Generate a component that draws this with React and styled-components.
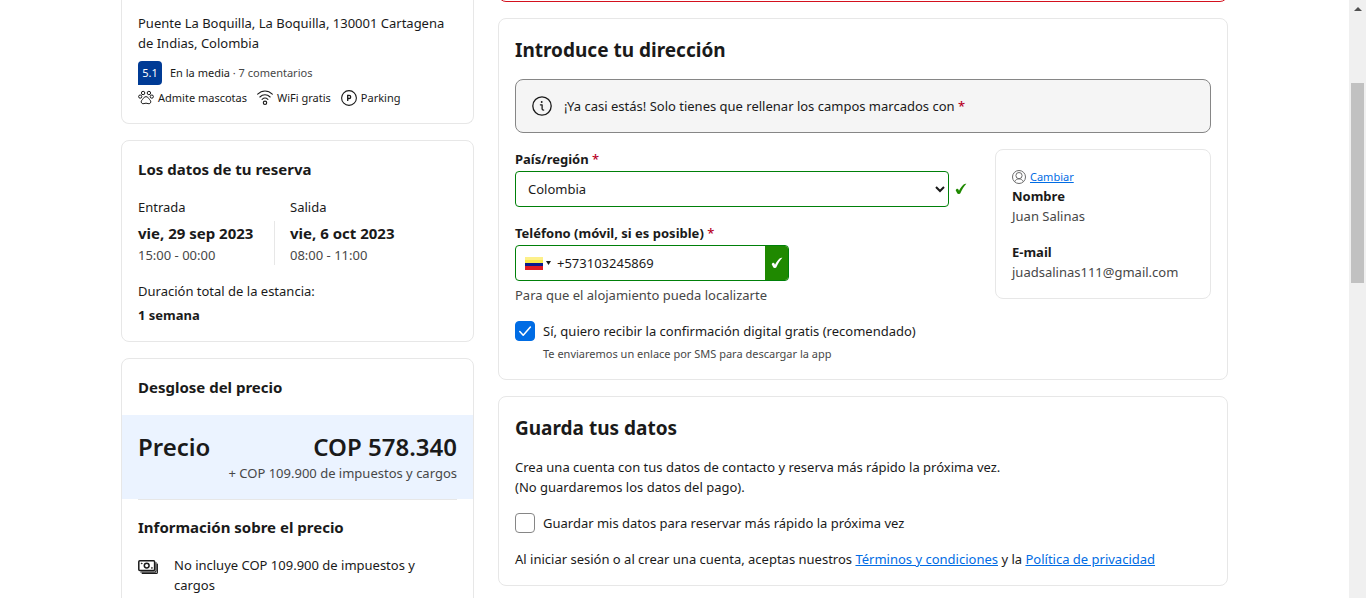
import React from 'react';
import styled, { createGlobalStyle, css } from 'styled-components';

const GlobalStyle = createGlobalStyle`
  *, *::before, *::after { box-sizing: border-box; }
  body { margin: 0; background: #fff; color: #1a1a1a; font: 13px/20px "Noto Sans", sans-serif; overflow: hidden; }
  h2, h3, p, dl, dd { margin: 0; }
  button, input, select { font: inherit; color: inherit; margin: 0; }
`;

const Viewport = styled.div`
  display: grid;
  grid-template-columns: minmax(0, 1fr) 17px;
  height: 100vh;
  overflow: hidden;
`;

const Page = styled.div`
  display: grid;
  grid-template-columns: minmax(0, 353fr) minmax(0, 730fr);
  gap: 24px;
  width: 100%;
  max-width: 1107px;
  margin: 0 auto;
  align-items: start;
`;

const Column = styled.div`
  display: flex;
  flex-direction: column;
  gap: 16px;
`;

const Card = styled.section`
  border: 1px solid #e7e7e7;
  border-radius: 8px;
  padding: 16px;
  ${(p) => p.$continued && css`
    border-top: 0;
    border-radius: 0 0 8px 8px;
    padding-top: 13px;
  `}
`;

const AlertClip = styled.div`
  display: flex;
  align-items: flex-end;
  height: 2px;
  overflow: hidden;
`;

const AlertEdge = styled.div`
  flex: 1;
  height: 24px;
  flex-shrink: 0;
  border: 1px solid #d4111e;
  border-radius: 8px;
`;

const SectionTitle = styled.h2`
  font-size: 19px;
  line-height: 30px;
  font-weight: 700;
  margin-bottom: 14px;
`;

const CardTitle = styled.h3`
  font-size: 15px;
  line-height: 24px;
  font-weight: 700;
  margin-bottom: 16px;
`;

const Strong = styled.strong`
  display: block;
  font-weight: 700;
`;

const Muted = styled.p`
  color: #474747;
`;

const Link = styled.a`
  color: #006ce4;
  text-decoration: underline;
  font-size: ${(p) => (p.$small ? '11px' : 'inherit')};
`;

const ReviewRow = styled.div`
  display: flex;
  align-items: center;
  gap: 8px;
  margin: 8px 0 4px;
`;

const Score = styled.span`
  display: grid;
  place-items: center;
  width: 24px;
  height: 24px;
  border-radius: 4px 4px 4px 0;
  background: #003b95;
  color: #fff;
  font-size: 11px;
`;

const ReviewText = styled.span`
  font-size: 11px;
`;

const Comments = styled.span`
  color: #474747;
`;

const Facilities = styled.ul`
  display: flex;
  gap: 10px;
  margin: 0;
  padding: 0;
  list-style: none;
  font-size: 11px;
  line-height: 18px;
`;

const Facility = styled.li`
  display: flex;
  align-items: center;
  gap: 4px;
`;

const Dates = styled.div`
  display: flex;
`;

const DateBlock = styled.div`
  position: relative;
  min-width: 120px;
  & + & {
    margin-left: 16px;
    padding-left: 16px;
  }
  & + &::before {
    content: '';
    position: absolute;
    left: 0;
    bottom: 0;
    height: 44px;
    border-left: 1px solid #e7e7e7;
  }
`;

const DateValue = styled.strong`
  display: block;
  font-size: 15px;
  line-height: 24px;
  font-weight: 700;
  margin-top: 4px;
`;

const Stay = styled.div`
  margin-top: 16px;
  display: grid;
  gap: 4px;
`;

const PriceBand = styled.div`
  display: grid;
  grid-template-columns: auto 1fr;
  margin: 0 -16px;
  padding: 16px;
  background: #ebf3ff;
`;

const Price = styled.strong`
  font-size: 24px;
  line-height: 32px;
  font-weight: 600;
  text-align: ${(p) => (p.$end ? 'right' : 'left')};
`;

const PriceNote = styled.p`
  grid-column: 1 / -1;
  text-align: right;
  color: #474747;
`;

const PriceInfo = styled.div`
  border-top: 1px solid #e7e7e7;
  padding-top: 15px;
`;

const PriceItem = styled.div`
  display: flex;
  align-items: flex-start;
  gap: 16px;
  padding-right: 16px;
  svg { flex: none; margin-top: 2px; }
`;

const Notice = styled.div`
  display: flex;
  align-items: center;
  gap: 12px;
  padding: 16px;
  margin-bottom: 16px;
  border: 1px solid #868686;
  border-radius: 8px;
  background: #f5f5f5;
`;

const Required = styled.span`
  color: #b8001f;
  font-weight: 500;
`;

const FormGrid = styled.div`
  display: grid;
  grid-template-columns: minmax(0, 1fr) 216px;
  gap: 16px;
  align-items: start;
`;

const Field = styled.div`
  margin-bottom: 16px;
`;

const Label = styled.label`
  display: block;
  font-weight: 700;
  margin-bottom: 2px;
`;

const SelectRow = styled.div`
  display: flex;
  align-items: center;
  gap: 6px;
  padding-right: 12px;
`;

const Select = styled.select`
  flex: 1;
  min-width: 0;
  height: 36px;
  padding: 0 1px 0 8px;
  border: 1px solid #008009;
  border-radius: 4px;
  background: #fff;
`;

const PhoneBox = styled.div`
  display: flex;
  width: 274px;
  max-width: 100%;
  height: 36px;
  border: 1px solid #008009;
  border-radius: 4px;
  overflow: hidden;
  margin-bottom: 4px;
`;

const FlagButton = styled.button`
  display: flex;
  align-items: center;
  gap: 3px;
  padding: 0 6px 0 9px;
  border: 0;
  background: none;
`;

const PhoneInput = styled.input`
  flex: 1;
  min-width: 0;
  padding: 0;
  border: 0;
  outline: 0;
  background: none;
`;

const ValidMark = styled.span`
  display: grid;
  place-items: center;
  width: 23px;
  background: #1f8900;
  color: #fff;
`;

const ValidGreen = styled.span`
  display: flex;
  color: #1f8900;
`;

const CheckRow = styled.label`
  display: flex;
  align-items: center;
  gap: 8px;
  margin-bottom: ${(p) => (p.$tight ? '4px' : '16px')};
`;

const BoxCell = styled.span`
  display: grid;
  place-items: center;
  width: 20px;
  height: 20px;
  & > * { grid-area: 1 / 1; }
  svg { display: none; pointer-events: none; }
  input:checked + svg { display: block; }
`;

const Checkbox = styled.input`
  appearance: none;
  width: 20px;
  height: 20px;
  border: 1px solid #868686;
  border-radius: 4px;
  background: #fff;
  &:checked { background: #006ce4; border-color: #006ce4; }
`;

const CheckHint = styled.p`
  padding-left: 28px;
  font-size: 11px;
  line-height: 18px;
  color: #474747;
`;

const UserCard = styled.aside`
  border: 1px solid #e7e7e7;
  border-radius: 8px;
  padding: 16px;
  overflow-wrap: anywhere;
`;

const ChangeRow = styled.div`
  display: flex;
  align-items: center;
  gap: 4px;
  height: 20px;
  padding-top: 2px;
`;

const Details = styled.dl`
  dt { font-weight: 700; }
  dd { color: #474747; }
  dd + dt { margin-top: 16px; }
`;

const Paragraph = styled.p`
  margin-bottom: ${(p) => (p.$last ? '0' : '16px')};
`;

const ScrollTrack = styled.div`
  display: flex;
  flex-direction: column;
  background: #f0f0f0;
`;

const ScrollButton = styled.button`
  display: grid;
  place-items: center;
  height: 17px;
  padding: 0;
  border: 0;
  background: none;
`;

const ScrollRail = styled.div`
  flex: 1;
  padding: 66px 2px 0;
`;

const ScrollThumb = styled.div`
  height: 200px;
  background: #c1c1c1;
`;

const PawIcon = () => (
  <svg width="16" height="16" viewBox="0 0 16 16" fill="none" stroke="#1a1a1a" strokeWidth="1">
    <circle cx="5.1" cy="3" r="1.7" />
    <circle cx="10.9" cy="3" r="1.7" />
    <circle cx="2.2" cy="6.600" r="1.600" />
    <circle cx="13.800" cy="6.600" r="1.600" />
    <path d="M8 6.700c-1.500 0-2.300 1-2.900 2-.7 1.100-2 1.800-1.900 3.200.1 1.500 1.500 2.100 2.800 1.700 1.300-.5 2.700-.5 4 0 1.300.4 2.700-.2 2.800-1.700.1-1.400-1.200-2.100-1.900-3.200-.6-1-1.400-2-2.900-2Z" />
  </svg>
);

const WifiIcon = () => (
  <svg width="16" height="16" viewBox="0 0 16 16" fill="none" stroke="#1a1a1a" strokeWidth="1.1" strokeLinecap="round">
    <path d="M.7 4.200C5-.1 11-.1 15.300 4.200M2.900 7c3-3 7.200-3 10.200 0M5.100 9.300c1.800-1.600 4-1.600 5.800 0" />
    <circle cx="8" cy="12.800" r="1.700" />
  </svg>
);

const ParkingIcon = () => (
  <svg width="16" height="16" viewBox="0 0 16 16" fill="none" stroke="#1a1a1a">
    <circle cx="8" cy="8" r="7.400" strokeWidth="1.100" />
    <path d="M6.700 11V5.300h1.400a1.600 1.600 0 0 1 0 3.200H6.700" strokeWidth="1.300" />
  </svg>
);

const InfoIcon = () => (
  <svg width="20" height="20" viewBox="0 0 20 20" fill="none" stroke="#1a1a1a" strokeWidth="1.300">
    <circle cx="10" cy="10" r="9.200" />
    <path d="M8.400 8.800h1.700v4.300c0 .7.500 1 1.600 1" strokeLinecap="round" strokeLinejoin="round" />
    <circle cx="9.700" cy="6" r=".95" fill="#1a1a1a" stroke="none" />
  </svg>
);

const MoneyIcon = () => (
  <svg width="20" height="20" viewBox="0 0 20 20" fill="none" stroke="#1a1a1a" strokeWidth="1.500" strokeLinecap="round" strokeLinejoin="round">
    <rect x=".8" y="3.800" width="15.800" height="9.600" rx="1" />
    <circle cx="8.700" cy="8.600" r="2.400" />
    <path d="M18 5.600v8.400a1 1 0 0 1-1 1H2.800M19.400 7v8.400a1 1 0 0 1-1 1H4.200" strokeWidth="1.100" />
    <circle cx="3.600" cy="6.400" r=".5" fill="#1a1a1a" strokeWidth=".5" />
    <circle cx="13.800" cy="10.900" r=".5" fill="#1a1a1a" strokeWidth=".5" />
  </svg>
);

const UserIcon = () => (
  <svg width="14" height="14" viewBox="0 0 14 14" fill="none" stroke="#6b6b6b">
    <circle cx="7" cy="7" r="6.500" />
    <circle cx="7" cy="5.600" r="3.100" />
    <path d="M2.600 11.700c1-1.900 2.500-2.800 4.400-2.800s3.400.9 4.400 2.800" />
  </svg>
);

const HeavyCheck = () => (
  <svg width="12" height="12" viewBox="0 0 12 12">
    <path d="M.7 7.200C.9 5.900 2.700 5 3.300 6.200l.7 1.500C5.400 5 7.200 2.700 8.900 1.300c.7-.6 1.700-.7 2.500-.5C9 3.500 7 6.500 5.500 9.900c-.5 1.200-2.800 1.300-3.300.3Z" fill="currentColor" />
  </svg>
);

const Tick = () => (
  <svg width="20" height="20" viewBox="0 0 20 20" fill="none" stroke="#fff" strokeWidth="1.500" strokeLinecap="round" strokeLinejoin="round">
    <path d="m4.800 10.600 3.400 3.700L15.400 6" />
  </svg>
);

const FlagIcon = () => (
  <svg width="18" height="13" viewBox="0 0 18 13">
    <path fill="#fbe84a" d="M0 0h18v7H0z" />
    <path fill="#fdf08a" d="M0 0h18v3H0z" />
    <path fill="#0a1a8c" d="M0 6h18v4H0z" />
    <path fill="#e01b22" d="M0 9h18v4H0z" />
  </svg>
);

const Caret = () => (
  <svg width="5" height="4" viewBox="0 0 5 4">
    <path d="M0 0h5L2.500 4z" fill="#1a1a1a" />
  </svg>
);

const ScrollArrow = ({ down }) => (
  <svg width="8" height="4" viewBox="0 0 8 4">
    <path d={down ? 'M0 0h8L4 4z' : 'M0 4h8L4 0z'} fill="#505050" />
  </svg>
);

function PropertyCard() {
  return (
    <Card $continued>
      <p>Puente La Boquilla, La Boquilla, 130001 Cartagena de Indias, Colombia</p>
      <ReviewRow>
        <Score>5.1</Score>
        <ReviewText>En la media <Comments>· 7 comentarios</Comments></ReviewText>
      </ReviewRow>
      <Facilities>
        <Facility><PawIcon />Admite mascotas</Facility>
        <Facility><WifiIcon />WiFi gratis</Facility>
        <Facility><ParkingIcon />Parking</Facility>
      </Facilities>
    </Card>
  );
}

function BookingCard() {
  return (
    <Card>
      <CardTitle>Los datos de tu reserva</CardTitle>
      <Dates>
        <DateBlock>
          <span>Entrada</span>
          <DateValue>vie, 29 sep 2023</DateValue>
          <Muted>15:00 - 00:00</Muted>
        </DateBlock>
        <DateBlock>
          <span>Salida</span>
          <DateValue>vie, 6 oct 2023</DateValue>
          <Muted>08:00 - 11:00</Muted>
        </DateBlock>
      </Dates>
      <Stay>
        <span>Duración total de la estancia:</span>
        <Strong>1 semana</Strong>
      </Stay>
    </Card>
  );
}

function PriceCard() {
  return (
    <Card>
      <CardTitle>Desglose del precio</CardTitle>
      <PriceBand>
        <Price>Precio</Price>
        <Price $end>COP 578.340</Price>
        <PriceNote>+ COP 109.900 de impuestos y cargos</PriceNote>
      </PriceBand>
      <PriceInfo>
        <CardTitle>Información sobre el precio</CardTitle>
        <PriceItem>
          <MoneyIcon />
          <p>No incluye COP 109.900 de impuestos y cargos</p>
        </PriceItem>
      </PriceInfo>
    </Card>
  );
}

function AddressCard() {
  return (
    <Card>
      <SectionTitle>Introduce tu dirección</SectionTitle>
      <Notice>
        <InfoIcon />
        <p>¡Ya casi estás! Solo tienes que rellenar los campos marcados con <Required>*</Required></p>
      </Notice>
      <FormGrid>
        <div>
          <Field>
            <Label htmlFor="country">País/región <Required>*</Required></Label>
            <SelectRow>
              <Select id="country" defaultValue="co">
                <option value="co">Colombia</option>
              </Select>
              <ValidGreen><HeavyCheck /></ValidGreen>
            </SelectRow>
          </Field>
          <Field>
            <Label htmlFor="phone">Teléfono (móvil, si es posible) <Required>*</Required></Label>
            <PhoneBox>
              <FlagButton type="button" aria-label="Colombia +57"><FlagIcon /><Caret /></FlagButton>
              <PhoneInput id="phone" type="tel" defaultValue="+573103245869" />
              <ValidMark><HeavyCheck /></ValidMark>
            </PhoneBox>
            <Muted>Para que el alojamiento pueda localizarte</Muted>
          </Field>
          <CheckRow $tight>
            <BoxCell><Checkbox type="checkbox" defaultChecked /><Tick /></BoxCell>
            Sí, quiero recibir la confirmación digital gratis (recomendado)
          </CheckRow>
          <CheckHint>Te enviaremos un enlace por SMS para descargar la app</CheckHint>
        </div>
        <UserCard>
          <ChangeRow><UserIcon /><Link href="#cambiar" $small>Cambiar</Link></ChangeRow>
          <Details>
            <dt>Nombre</dt>
            <dd>Juan Salinas</dd>
            <dt>E-mail</dt>
            <dd>juadsalinas111@gmail.com</dd>
          </Details>
        </UserCard>
      </FormGrid>
    </Card>
  );
}

function SaveCard() {
  return (
    <Card>
      <SectionTitle>Guarda tus datos</SectionTitle>
      <Paragraph>
        Crea una cuenta con tus datos de contacto y reserva más rápido la próxima vez.
        <br />
        (No guardaremos los datos del pago).
      </Paragraph>
      <CheckRow>
        <BoxCell><Checkbox type="checkbox" /><Tick /></BoxCell>
        Guardar mis datos para reservar más rápido la próxima vez
      </CheckRow>
      <Paragraph $last>
        Al iniciar sesión o al crear una cuenta, aceptas nuestros <Link href="#terminos">Términos y condiciones</Link> y la <Link href="#privacidad">Política de privacidad</Link>
      </Paragraph>
    </Card>
  );
}

export default function App() {
  return (
    <>
      <GlobalStyle />
      <Viewport>
        <Page>
          <Column>
            <PropertyCard />
            <BookingCard />
            <PriceCard />
          </Column>
          <Column as="main">
            <AlertClip><AlertEdge /></AlertClip>
            <AddressCard />
            <SaveCard />
          </Column>
        </Page>
        <ScrollTrack>
          <ScrollButton type="button" aria-label="Subir"><ScrollArrow /></ScrollButton>
          <ScrollRail><ScrollThumb /></ScrollRail>
          <ScrollButton type="button" aria-label="Bajar"><ScrollArrow down /></ScrollButton>
        </ScrollTrack>
      </Viewport>
    </>
  );
}
